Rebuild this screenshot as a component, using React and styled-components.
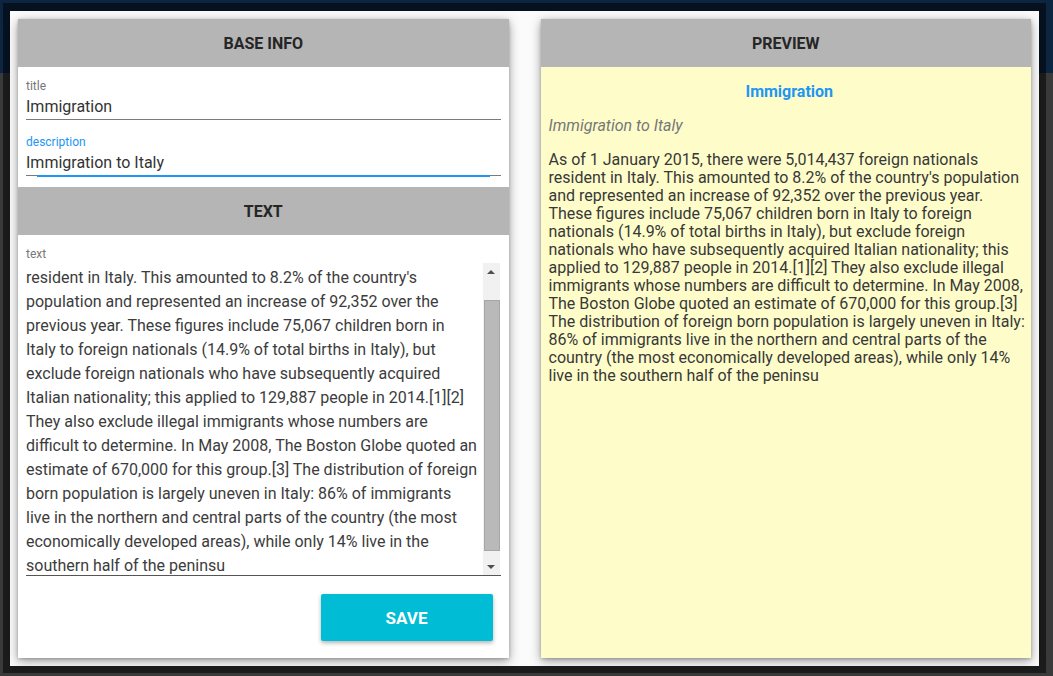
import React, { useEffect, useRef } from "react";
import styled, { createGlobalStyle } from "styled-components";

const GlobalStyle = createGlobalStyle`
  html, body {
    margin: 0;
    height: 100%;
    overflow: hidden;
  }
  body {
    font-family: Roboto, "Liberation Sans", sans-serif;
    background: linear-gradient(#0c2540 0, #0c2540 73px, #3a3a3a 73px);
  }
  #root {
    height: 100%;
  }
  * {
    box-sizing: border-box;
  }
`;

const Shell = styled.div`
  height: 100%;
  padding: 3px 7px 3px 3px;
`;

const Backdrop = styled.div`
  height: 100%;
  padding: 8px 7px 7px 7px;
  background: rgba(0, 0, 0, 0.52);
`;

const Modal = styled.div`
  height: 100%;
  padding: 8px;
  background: #fbfbfb;
  display: grid;
  grid-template-columns: 1fr 1fr;
  gap: 32px;
`;

const Panel = styled.section`
  display: flex;
  flex-direction: column;
  background: ${(p) => p.$bg || "#fff"};
  box-shadow: 0 3px 10px rgba(0, 0, 0, 0.38), 0 1px 3px rgba(0, 0, 0, 0.2);
  min-height: 0;
`;

const Header = styled.div`
  height: 48px;
  flex: none;
  display: flex;
  align-items: center;
  justify-content: center;
  padding-top: 1px;
  background: #b5b5b5;
  color: #262626;
  font-size: 16px;
  font-weight: 700;
`;

const Section = styled.div`
  display: flex;
  flex-direction: column;
  padding: 12px 8px ${(p) => p.$bottom || 11}px;
  flex: ${(p) => (p.$grow ? 1 : "none")};
`;

const Field = styled.div`
  position: relative;
  display: flex;
  flex-direction: column;
  & + & {
    margin-top: 15px;
  }
  ${(p) =>
    p.$focused &&
    `
    &::after {
      content: "";
      position: absolute;
      left: 11px;
      right: 11px;
      bottom: -1px;
      height: 2px;
      background: #2196f3;
    }
  `}
`;

const Label = styled.label`
  font-size: 12px;
  line-height: 14px;
  color: ${(p) => (p.$active ? "#2196f3" : "#777")};
`;

const Input = styled.input`
  height: 27px;
  padding: 0;
  border: none;
  border-bottom: 1px solid #7a7a7a;
  background: transparent;
  font-family: inherit;
  font-size: 16px;
  color: #333;
  outline: none;
`;

const TextWrap = styled.div`
  display: flex;
  margin-top: 2px;
  border-bottom: 1px solid #555;
`;

const TextArea = styled.textarea`
  flex: 1;
  height: 312px;
  padding: 0 5px 0 0;
  border: none;
  resize: none;
  overflow: hidden;
  background: transparent;
  font-family: inherit;
  font-size: 16px;
  line-height: 24px;
  color: #3c3c3c;
  outline: none;
`;

const Scrollbar = styled.div`
  width: 17px;
  margin-right: 1px;
  display: flex;
  flex-direction: column;
  background: #f1f1f1;
`;

const ScrollButton = styled.div`
  height: 17px;
  flex: none;
  display: flex;
  align-items: center;
  justify-content: center;
`;

const Arrow = styled.span`
  width: 0;
  height: 0;
  border-left: 4px solid transparent;
  border-right: 4px solid transparent;
  ${(p) =>
    p.$down
      ? "border-top: 4px solid #505050;"
      : "border-bottom: 4px solid #505050;"}
`;

const Track = styled.div`
  flex: 1;
  display: flex;
  flex-direction: column;
  padding: 20px 0 7px;
`;

const Thumb = styled.div`
  height: 251px;
  margin: 0 0 0 1px;
  background: #b9b9b9;
  border: 1px solid #a6a6a6;
`;

const Actions = styled.div`
  display: flex;
  justify-content: flex-end;
  padding-right: 8px;
  margin-top: 18px;
`;

const SaveButton = styled.button`
  width: 172px;
  height: 47px;
  border: none;
  border-radius: 2px;
  background: #00bcd4;
  color: #fff;
  font-family: inherit;
  font-size: 17px;
  font-weight: 700;
  box-shadow: 0 2px 4px rgba(0, 0, 0, 0.3);
  cursor: pointer;
`;

const PreviewBody = styled.div`
  flex: 1;
  padding: 16px 1px 16px 8px;
  font-size: 16px;
  line-height: 18px;
  color: #383838;
`;

const PreviewTitle = styled.h2`
  margin: 0;
  text-align: center;
  font-size: 16px;
  line-height: 18px;
  font-weight: 700;
  color: #2196f3;
`;

const PreviewDesc = styled.p`
  margin: 16px 0 0;
  font-style: italic;
  color: #777;
`;

const PreviewText = styled.p`
  margin: 16px 0 0;
`;

const title = "Immigration";
const description = "Immigration to Italy";
const text =
  "As of 1 January 2015, there were 5,014,437 foreign nationals resident in Italy. This amounted to 8.2% of the country's population and represented an increase of 92,352 over the previous year. These figures include 75,067 children born in Italy to foreign nationals (14.9% of total births in Italy), but exclude foreign nationals who have subsequently acquired Italian nationality; this applied to 129,887 people in 2014.[1][2] They also exclude illegal immigrants whose numbers are difficult to determine. In May 2008, The Boston Globe quoted an estimate of 670,000 for this group.[3] The distribution of foreign born population is largely uneven in Italy: 86% of immigrants live in the northern and central parts of the country (the most economically developed areas), while only 14% live in the southern half of the peninsu";

export default function App() {
  const textRef = useRef(null);

  useEffect(() => {
    const el = textRef.current;
    if (!el) return;
    el.scrollTop = 21;
    const id = requestAnimationFrame(() => {
      el.scrollTop = 21;
    });
    return () => cancelAnimationFrame(id);
  }, []);

  return (
    <>
      <GlobalStyle />
      <Shell>
        <Backdrop>
          <Modal>
            <Panel>
              <Header>BASE INFO</Header>
              <Section>
                <Field>
                  <Label>title</Label>
                  <Input defaultValue={title} />
                </Field>
                <Field $focused>
                  <Label $active>description</Label>
                  <Input defaultValue={description} />
                </Field>
              </Section>
              <Header>TEXT</Header>
              <Section $grow $bottom={17}>
                <Label>text</Label>
                <TextWrap>
                  <TextArea ref={textRef} defaultValue={text} />
                  <Scrollbar>
                    <ScrollButton>
                      <Arrow />
                    </ScrollButton>
                    <Track>
                      <Thumb />
                    </Track>
                    <ScrollButton>
                      <Arrow $down />
                    </ScrollButton>
                  </Scrollbar>
                </TextWrap>
                <Actions>
                  <SaveButton>SAVE</SaveButton>
                </Actions>
              </Section>
            </Panel>
            <Panel $bg="#fefdca">
              <Header>PREVIEW</Header>
              <PreviewBody>
                <PreviewTitle>{title}</PreviewTitle>
                <PreviewDesc>{description}</PreviewDesc>
                <PreviewText>{text}</PreviewText>
              </PreviewBody>
            </Panel>
          </Modal>
        </Backdrop>
      </Shell>
    </>
  );
}
